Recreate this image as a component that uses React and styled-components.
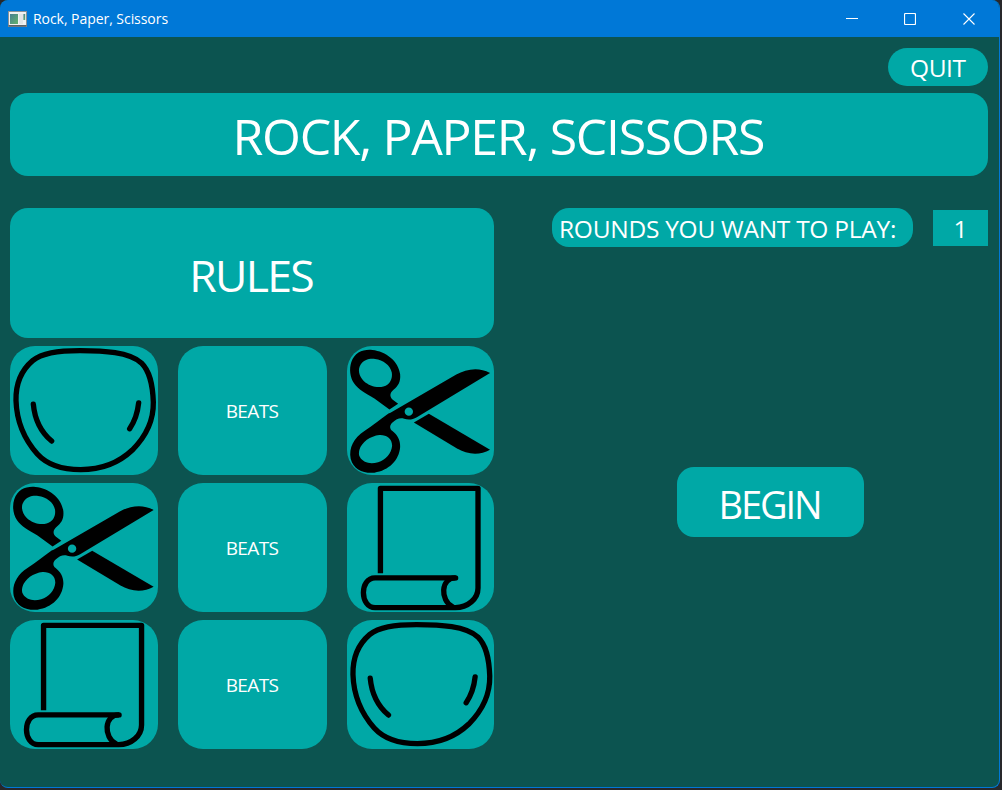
import React from "react";
import styled, { createGlobalStyle } from "styled-components";

const TEAL = "#00a8a6";
const DARK = "#0c5450";
const BLUE = "#0078d7";

const GlobalStyle = createGlobalStyle`
  * { box-sizing: border-box; }
  body { margin: 0; background: #28282b; font-family: "Open Sans", "Noto Sans", sans-serif; color: #fff; }
  button { font: inherit; color: inherit; border: 0; padding: 0; }
`;

const Desktop = styled.div`
  width: 1002px;
  height: 790px;
  overflow: hidden;
`;

const Window = styled.div`
  width: 1000px;
  height: 788px;
  display: flex;
  flex-direction: column;
  background: ${DARK};
  border: 1px solid ${BLUE};
  border-left: 0;
  border-top: 0;
  border-radius: 8px;
  overflow: hidden;
`;

const TitleBar = styled.header`
  height: 37px;
  flex: none;
  display: flex;
  align-items: center;
  padding: 0 1px 0 8px;
  background: ${BLUE};
`;

const Caption = styled.span`
  margin-left: 6px;
  flex: 1;
  font-size: 14px;
  line-height: 36px;
  letter-spacing: ${(p) => p.$tracking}px;
`;

const WindowButton = styled.button`
  width: 58.5px;
  height: 36px;
  display: grid;
  place-items: center;
  background: transparent;
`;

const Body = styled.main`
  display: flex;
  flex-direction: column;
  padding: 11px 11px 0 10px;
`;

const Panel = styled.div`
  display: flex;
  align-items: center;
  justify-content: ${(p) => p.$align || "center"};
  width: ${(p) => p.$w};
  height: ${(p) => p.$h}px;
  border-radius: ${(p) => p.$r}px;
  background: ${TEAL};
  overflow: hidden;
`;

const Label = styled.span`
  font-size: ${(p) => p.$size}px;
  line-height: 1;
  letter-spacing: ${(p) => p.$tracking || 0}px;
  margin-right: ${(p) => -(p.$tracking || 0)}px;
  margin-left: ${(p) => p.$indent || 0}px;
  white-space: nowrap;
  padding-top: ${(p) => p.$drop || 0}px;
`;

const TopRow = styled.div`
  display: flex;
  justify-content: flex-end;
  margin-bottom: 7px;
`;

const Columns = styled.div`
  display: flex;
  justify-content: space-between;
  margin-top: 32px;
`;

const Rules = styled.section`
  width: 484px;
  display: flex;
  flex-direction: column;
  gap: 8.4px;
`;

const RuleGrid = styled.div`
  display: grid;
  grid-template-columns: 148px 148.6px 147.4px;
  grid-auto-rows: 129.3px;
  gap: 7.7px 20px;
`;

const Setup = styled.section`
  width: 436px;
  display: flex;
  flex-direction: column;
`;

const RoundsRow = styled.div`
  display: flex;
  align-items: flex-end;
  justify-content: space-between;
`;

const RoundsInput = styled(Panel)`
  margin-bottom: 1px;
`;

const BeginRow = styled.div`
  display: flex;
  justify-content: center;
  margin-top: 220px;
  padding-left: 1px;
`;

const Art = styled.svg`
  display: block;
  width: 100%;
  height: 100%;
`;

const AppIcon = () => (
  <svg width="19" height="16" viewBox="0 0 19 16">
    <defs>
      <linearGradient id="screen" x1="0" y1="0" x2="1" y2="1">
        <stop offset="0" stopColor="#477f91" />
        <stop offset="1" stopColor="#62b26b" />
      </linearGradient>
    </defs>
    <rect x="0.5" y="0.5" width="18" height="15" fill="#f1f1f1" stroke="#8b9297" />
    <rect x="0.5" y="14" width="18" height="1.6" fill="#5b6369" />
    <rect x="2" y="3" width="8" height="10" fill="url(#screen)" />
    <rect x="11" y="3" width="4" height="10" fill="#e2e5e6" />
    <rect x="15.4" y="3" width="1.8" height="6" fill="url(#screen)" />
  </svg>
);

const Rock = () => (
  <Art viewBox="30 18 444 389" preserveAspectRatio="none">
    <g fill="none" stroke="#000" strokeWidth="16" strokeLinecap="round">
      <path d="M240 32 C170 32 126 39 98 62 C65 90 47 130 48 182 C50 245 74 300 112 343 C142 376 187 390 242 390 C302 390 354 372 397 331 C440 288 461 237 460 187 C458 131 449 94 424 69 C387 36 312 32 240 32 Z" />
      <path d="M100 193 C104 236 123 277 155 304" />
      <path d="M416 189 C413 218 404 245 389 267" />
    </g>
  </Art>
);

const Scissors = () => (
  <Art viewBox="21 18 441 389" preserveAspectRatio="none">
    <path
      fillRule="evenodd"
      d="M148 209 L103 176 C76 160 55 149 42 130 C30 112 27 87 34 66 C44 37 70 27 97 30 C137 34 175 63 180 103 C182 126 174 138 161 149 C147 161 149 171 158 180 L174 192 Z
         M62 74 C52 89 57 109 71 123 C87 138 110 145 130 140 C150 135 158 116 155 98 C151 76 129 60 105 57 C87 55 70 60 62 74 Z"
    />
    <path
      fillRule="evenodd"
      d="M145 221 L151 219 L348 104 C377 87 415 80 449 99 L230 232 C216 241 203 240 192 237 C179 233 169 238 157 248 C148 256 148 267 157 274 C171 285 181 301 180 322 C177 362 146 393 103 399 C69 402 40 389 32 357 C26 325 41 295 73 274 C97 258 118 241 145 221 Z
         M60 353 C70 370 91 374 114 368 C137 361 154 341 156 318 C156 296 139 285 118 286 C91 289 65 307 58 331 C56 340 56 347 60 353 Z
         M206 203 A12.5 12.5 0 1 0 206 228 A12.5 12.5 0 1 0 206 203 Z"
    />
    <path d="M266 222 L449 330 C418 348 381 345 349 326 L221 248 Z" />
  </Art>
);

const Paper = () => (
  <Art viewBox="21 15 441 387" preserveAspectRatio="none">
    <g fill="none" stroke="#000" strokeWidth="16">
      <path d="M121 285 V31 H413 V329 C413 362 382 388 345 388 H105 C59 388 58 299 105 299 H346" strokeLinejoin="round" />
      <path d="M346 299 C301 299 299 366 337 386" strokeLinecap="round" />
    </g>
  </Art>
);

const Card = ({ children }) => (
  <Panel $w="100%" $h={129.3} $r={25}>{children}</Panel>
);

const Beats = () => (
  <Card><Label $size={19} $tracking={-0.6} $drop={2.4}>BEATS</Label></Card>
);

export default function App() {
  return (
    <Desktop>
      <GlobalStyle />
      <Window>
        <TitleBar>
          <AppIcon />
          <Caption $tracking={-0.05}>Rock, Paper, Scissors</Caption>
          <WindowButton aria-label="Minimize">
            <svg width="12" height="12"><path d="M0 5.5H12" stroke="#fff" /></svg>
          </WindowButton>
          <WindowButton aria-label="Maximize">
            <svg width="12" height="12"><rect x="0.5" y="0.5" width="11" height="11" rx="1" fill="none" stroke="#fff" strokeWidth="1.2" /></svg>
          </WindowButton>
          <WindowButton aria-label="Close">
            <svg width="12" height="12"><path d="M0.5 0.5L11.5 11.5M11.5 0.5L0.5 11.5" stroke="#fff" strokeWidth="1.1" /></svg>
          </WindowButton>
        </TitleBar>
        <Body>
          <TopRow>
            <Panel as="button" $w="100px" $h={38} $r={19}>
              <Label $size={24.5} $tracking={-0.4} $drop={2}>QUIT</Label>
            </Panel>
          </TopRow>
          <Panel $w="978px" $h={82.5} $r={18}>
            <Label $size={50} $tracking={-1.3} $drop={4}>ROCK, PAPER, SCISSORS</Label>
          </Panel>
          <Columns>
            <Rules>
              <Panel $w="100%" $h={130} $r={18}>
                <Label $size={44.5} $tracking={-1.7} $drop={5}>RULES</Label>
              </Panel>
              <RuleGrid>
                <Card><Rock /></Card>
                <Beats />
                <Card><Scissors /></Card>
                <Card><Scissors /></Card>
                <Beats />
                <Card><Paper /></Card>
                <Card><Paper /></Card>
                <Beats />
                <Card><Rock /></Card>
              </RuleGrid>
            </Rules>
            <Setup>
              <RoundsRow>
                <Panel $w="361px" $h={39} $r={17} $align="flex-start">
                  <Label $size={24.5} $tracking={-0.27} $indent={7} $drop={4}>ROUNDS YOU WANT TO PLAY:</Label>
                </Panel>
                <RoundsInput $w="55px" $h={36} $r={0}>
                  <Label $size={24.5} $drop={3}>1</Label>
                </RoundsInput>
              </RoundsRow>
              <BeginRow>
                <Panel as="button" $w="187px" $h={70} $r={17}>
                  <Label $size={38} $tracking={-2.1} $drop={5}>BEGIN</Label>
                </Panel>
              </BeginRow>
            </Setup>
          </Columns>
        </Body>
      </Window>
    </Desktop>
  );
}
